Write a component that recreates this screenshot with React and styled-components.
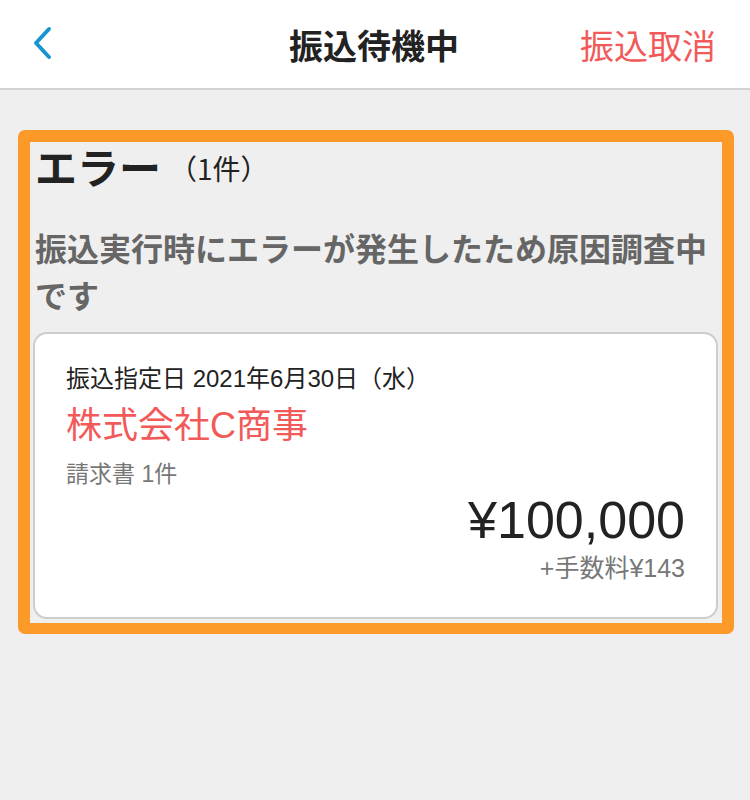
import React from 'react';
import styled, { createGlobalStyle } from 'styled-components';

const GlobalStyle = createGlobalStyle`
    body {
        margin: 0;
        background: #efefef;
        font-family: "Liberation Sans", "Noto Sans CJK JP", sans-serif;
    }
`;

const Page = styled.div`
    width: 750px;
    min-height: 800px;
    background: #efefef;
`;

const Header = styled.header`
    height: 88px;
    background: #fff;
    border-bottom: 2px solid #d3d3d3;
    display: grid;
    grid-template-columns: 1fr auto 1fr;
    align-items: center;
    padding: 0 34px 0 32px;
`;

const BackButton = styled.button`
    justify-self: start;
    background: transparent;
    border: none;
    padding: 0;
    display: flex;
    align-items: center;
`;

const Title = styled.h1`
    margin: 0;
    font-size: 34px;
    font-weight: 700;
    color: #222;
    font-family: "Noto Sans CJK JP", sans-serif;
`;

const CancelLink = styled.span`
    justify-self: end;
    font-size: 34px;
    color: #f25a5a;
    font-family: "Noto Sans CJK JP", sans-serif;
`;

const Body = styled.main`
    padding: 40px 16px 0 18px;
`;

const Highlight = styled.section`
    border: 12px solid #fb9a29;
    border-bottom-width: 11px;
    border-radius: 7px;
    padding: 0 4px 4px 3px;
`;

const SectionTitle = styled.div`
    display: flex;
    align-items: center;
    height: 48px;
    padding-left: 2px;
    color: #222;
`;

const TitleMain = styled.span`
    font-size: 42px;
    line-height: 48px;
    font-weight: 700;
    font-family: "Noto Sans CJK JP", sans-serif;
`;

const TitleCount = styled.span`
    font-size: 28px;
    line-height: 48px;
    margin: 4px 0 0 8px;
    font-family: "Noto Sans CJK JP", sans-serif;
`;

const Message = styled.p`
    margin: 34px 0 14px;
    padding-left: 2px;
    font-size: 32px;
    line-height: 47px;
    font-weight: 700;
    color: #666;
    font-family: "Noto Sans CJK JP", sans-serif;
`;

const Card = styled.div`
    background: #fff;
    border: 2px solid #cdcdcd;
    border-radius: 14px;
    padding: 28px 31px 33px 31px;
    display: flex;
    flex-direction: column;
`;

const DateLine = styled.div`
    font-size: 24px;
    line-height: 34px;
    color: #222;
`;

const Company = styled.div`
    margin-top: 7px;
    font-size: 36px;
    line-height: 46px;
    color: #f25a5a;
`;

const Invoice = styled.div`
    margin-top: 9px;
    font-size: 23px;
    line-height: 32px;
    color: #777;
`;

const Amount = styled.div`
    align-self: flex-end;
    margin-top: 2px;
    font-size: 52px;
    line-height: 56px;
    color: #222;
`;

const Fee = styled.div`
    align-self: flex-end;
    margin-top: 4px;
    font-size: 25px;
    line-height: 32px;
    color: #777;
`;

const ChevronLeft = () => (
    <svg width="22" height="36" viewBox="0 0 22 36">
        <polyline
            points="17,3 4,17 17,31"
            fill="none"
            stroke="#1a94d0"
            strokeWidth="4"
            strokeLinecap="round"
            strokeLinejoin="round"
        />
    </svg>
);

export default function App()
{
    return (
        <Page>
            <GlobalStyle />
            <Header>
                <BackButton aria-label="戻る">
                    <ChevronLeft />
                </BackButton>
                <Title>振込待機中</Title>
                <CancelLink>振込取消</CancelLink>
            </Header>
            <Body>
                <Highlight>
                    <SectionTitle>
                        <TitleMain>エラー</TitleMain>
                        <TitleCount>（1件）</TitleCount>
                    </SectionTitle>
                    <Message>振込実行時にエラーが発生したため原因調査中です</Message>
                    <Card>
                        <DateLine>振込指定日 2021年6月30日（水）</DateLine>
                        <Company>株式会社C商事</Company>
                        <Invoice>請求書 1件</Invoice>
                        <Amount>¥100,000</Amount>
                        <Fee>+手数料¥143</Fee>
                    </Card>
                </Highlight>
            </Body>
        </Page>
    );
}
